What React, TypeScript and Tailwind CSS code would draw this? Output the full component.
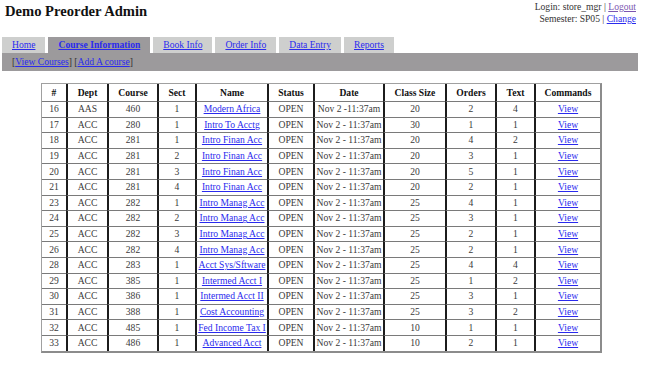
import React from "react";

const rows: [string, string, string, string, string, string, string, string, string][] = [
  ["16", "AAS", "460", "1", "Modern Africa", "Nov 2 -11:37am", "20", "2", "4"],
  ["17", "ACC", "280", "1", "Intro To Acctg", "Nov 2 - 11:37am", "30", "1", "1"],
  ["18", "ACC", "281", "1", "Intro Finan Acc", "Nov 2 - 11:37am", "20", "4", "2"],
  ["19", "ACC", "281", "2", "Intro Finan Acc", "Nov 2 - 11:37am", "20", "3", "1"],
  ["20", "ACC", "281", "3", "Intro Finan Acc", "Nov 2 - 11:37am", "20", "5", "1"],
  ["21", "ACC", "281", "4", "Intro Finan Acc", "Nov 2 - 11:37am", "20", "2", "1"],
  ["23", "ACC", "282", "1", "Intro Manag Acc", "Nov 2 - 11:37am", "25", "4", "1"],
  ["24", "ACC", "282", "2", "Intro Manag Acc", "Nov 2 - 11:37am", "25", "3", "1"],
  ["25", "ACC", "282", "3", "Intro Manag Acc", "Nov 2 - 11:37am", "25", "2", "1"],
  ["26", "ACC", "282", "4", "Intro Manag Acc", "Nov 2 - 11:37am", "25", "2", "1"],
  ["28", "ACC", "283", "1", "Acct Sys/Sftware", "Nov 2 - 11:37am", "25", "4", "4"],
  ["29", "ACC", "385", "1", "Intermed Acct I", "Nov 2 - 11:37am", "25", "1", "2"],
  ["30", "ACC", "386", "1", "Intermed Acct II", "Nov 2 - 11:37am", "25", "3", "1"],
  ["31", "ACC", "388", "1", "Cost Accounting", "Nov 2 - 11:37am", "25", "3", "2"],
  ["32", "ACC", "485", "1", "Fed Income Tax I", "Nov 2 - 11:37am", "10", "1", "1"],
  ["33", "ACC", "486", "1", "Advanced Acct", "Nov 2 - 11:37am", "10", "2", "1"],
];

const headers = ["#", "Dept", "Course", "Sect", "Name", "Status", "Date", "Class Size", "Orders", "Text", "Commands"];
const widths = [24, 41, 50, 38, 72, 46, 70, 62, 50, 39, 66];

const tabs = ["Home", "Course Information", "Book Info", "Order Info", "Data Entry", "Reports"];

export default function App() {
  return (
    <div className="w-[648px] h-[376px] bg-white text-black overflow-hidden" style={{ fontFamily: '"Liberation Serif", "Times New Roman", serif' }}>
      <div className="flex justify-between items-start">
        <div className="pl-[5px] pt-[3px] text-[14.6px] leading-[17px] font-bold text-[#111]">Demo Preorder Admin</div>
        <div className="pr-[12px] pt-[1px] text-[9.6px] leading-[12px] text-right text-[#333]">
          <div>
            Login: store_mgr | <a href="#" className="underline text-[#7b55b0]">Logout</a>
          </div>
          <div>
            Semester: SP05 | <a href="#" className="underline text-[#2a2aee]">Change</a>
          </div>
        </div>
      </div>

      <div className="mt-[12px] ml-[2px] flex gap-[3px] text-[9.6px] leading-[16px]">
        {tabs.map((t) => (
          <div
            key={t}
            className={
              t === "Course Information"
                ? "h-[16px] px-[10px] bg-[#9c9a9c] font-bold"
                : "h-[16px] px-[10px] bg-[#cecfce]"
            }
          >
            <a href="#" className="underline text-[#2a2aee]">{t}</a>
          </div>
        ))}
      </div>
      <div className="ml-[2px] w-[636px] h-[18px] bg-[#9c9a9c] pl-[10px] text-[9.6px] leading-[18px] text-[#333]">
        [<a href="#" className="underline text-[#2a2aee]">View Courses</a>] [<a href="#" className="underline text-[#2a2aee]">Add A course</a>]
      </div>

      <table
        className="mt-[12px] ml-[41px] table-fixed border-separate border-spacing-0 border-t border-l border-r-2 border-b-2 border-t-[#a0a0a0] border-l-[#a0a0a0] border-r-[#8c8c8c] border-b-[#8c8c8c] text-[9.6px] text-[#3a3a3a]"
        style={{ width: 558 }}
      >
        <colgroup>
          {widths.map((w, i) => (
            <col key={i} style={{ width: w }} />
          ))}
        </colgroup>
        <thead>
          <tr className="h-[17px]">
            {headers.map((h, i) => (
              <th
                key={h}
                className={
                  (i === 0 ? "" : "border-l-2 border-l-[#1c1c1c] ") +
                  "p-0 font-bold text-center text-[#111] leading-[12px] whitespace-nowrap"
                }
              >
                {h}
              </th>
            ))}
          </tr>
        </thead>
        <tbody>
          {rows.map((r) => {
            const cells = [r[0], r[1], r[2], r[3], r[4], "OPEN", r[5], r[6], r[7], r[8], "View"];
            return (
              <tr key={r[0]} className="h-[15.6px]">
                {cells.map((c, i) => (
                  <td
                    key={i}
                    className={
                      (i === 0 ? "" : "border-l-2 border-l-[#1c1c1c] ") +
                      "border-t border-t-[#7a7a7a] p-0 text-center leading-[12px] whitespace-nowrap overflow-visible"
                    }
                  >
                    {i === 4 || i === 10 ? (
                      <a href="#" className="underline text-[#2a2aee]">{c}</a>
                    ) : (
                      c
                    )}
                  </td>
                ))}
              </tr>
            );
          })}
        </tbody>
      </table>
    </div>
  );
}
